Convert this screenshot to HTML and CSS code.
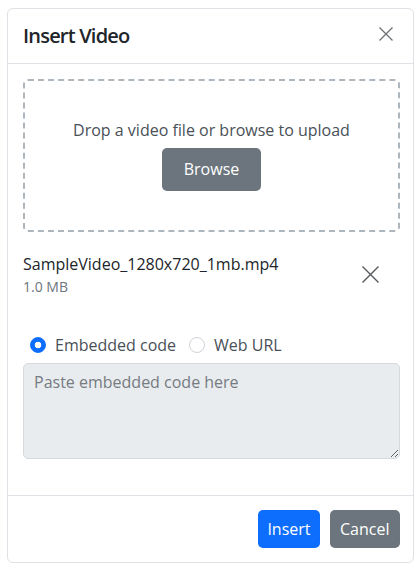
FILE: index.html
```html
<!DOCTYPE html>
<html lang="en">
<head>
<meta charset="utf-8">
<title>Insert Video</title>
<link rel="stylesheet" href="styles.css">
</head>
<body>
<div class="modal">
  <div class="modal-header">
    <h5 class="modal-title">Insert Video</h5>
    <button class="btn-close" type="button" aria-label="Close">
      <svg width="14" height="14" viewBox="0 0 14 14"><path d="M0.5 0.5L13.5 13.5M13.5 0.5L0.5 13.5" stroke="#6d7073" stroke-width="1.3" fill="none"/></svg>
    </button>
  </div>
  <div class="modal-body">
    <div class="dropzone">
      <p class="drop-text">Drop a video file or browse to upload</p>
      <button class="btn btn-browse" type="button">Browse</button>
    </div>
    <div class="file-row">
      <div class="file-info">
        <div class="file-name">SampleVideo_1280x720_1mb.mp4</div>
        <div class="file-size">1.0 MB</div>
      </div>
      <button class="file-remove" type="button" aria-label="Remove">
        <svg width="17" height="17" viewBox="0 0 17 17"><path d="M0.5 0.5L16.5 16.5M16.5 0.5L0.5 16.5" stroke="#55595d" stroke-width="1.4" fill="none"/></svg>
      </button>
    </div>
    <div class="radio-row">
      <label class="radio"><input type="radio" name="src" checked><span>Embedded code</span></label>
      <label class="radio"><input type="radio" name="src"><span>Web URL</span></label>
    </div>
    <textarea class="code-area" placeholder="Paste embedded code here" disabled></textarea>
  </div>
  <div class="modal-footer">
    <button class="btn btn-primary" type="button">Insert</button>
    <button class="btn btn-secondary" type="button">Cancel</button>
  </div>
</div>
</body>
</html>
```

FILE: styles.css
```css
* { box-sizing: border-box; }

body {
  margin: 0;
  background: #ffffff;
  font-family: "Segoe UI", "Open Sans", sans-serif;
  font-size: 16px;
  line-height: 24px;
  color: #212529;
}

.modal {
  margin: 8px 0 0 7px;
  width: 407px;
  border: 1px solid #dee2e6;
  border-radius: 6px;
  background: #fff;
}

.modal-header {
  display: flex;
  align-items: center;
  justify-content: space-between;
  padding: 15px 15px 15px 15px;
  border-bottom: 1px solid #dee2e6;
}

.modal-title {
  margin: 0;
  font-size: 20px;
  line-height: 24px;
  font-weight: 600;
  letter-spacing: -0.8px;
  color: #212529;
}

.btn-close {
  width: 24px;
  height: 24px;
  padding: 0;
  border: 0;
  background: transparent;
  display: flex;
  align-items: center;
  justify-content: center;
  margin-top: -5px;
}

.modal-body {
  padding: 15px 13px 36px 15px;
}

.dropzone {
  height: 153px;
  padding-bottom: 3px;
  border: 2px dashed #adb5bd;
  border-radius: 5px;
  display: flex;
  flex-direction: column;
  align-items: center;
  justify-content: center;
  gap: 6px;
}

.drop-text {
  margin: 0;
  color: #495057;
  font-size: 16px;
  line-height: 24px;
}

.btn {
  font-family: inherit;
  font-size: 16px;
  line-height: 24px;
  border: 1px solid transparent;
  border-radius: 5px;
  color: #fff;
  padding: 6px 10px;
}

.btn-browse {
  background: #6c757d;
  padding: 8px 21px 9px;
}

.file-row {
  margin-top: 20px;
  display: flex;
  align-items: center;
  justify-content: space-between;
}

.file-name {
  font-size: 16px;
  line-height: 24px;
  color: #212529;
}

.file-size {
  font-size: 14px;
  line-height: 21px;
  color: #6c757d;
}

.file-remove {
  border: 0;
  background: transparent;
  padding: 0;
  width: 17px;
  height: 17px;
  margin-right: 21px;
  display: flex;
}

.radio-row {
  margin-top: 36px;
  display: flex;
  align-items: center;
  padding-left: 7px;
  gap: 13px;
}

.radio {
  display: flex;
  align-items: center;
  gap: 9px;
  color: #495057;
}

.radio input {
  appearance: none;
  -webkit-appearance: none;
  margin: 0;
  width: 16px;
  height: 16px;
  border-radius: 50%;
  border: 1px solid #ced4da;
  background: #fff;
}

.radio input:checked {
  border-color: #0d6efd;
  background: radial-gradient(circle, #fff 0 3px, #0d6efd 3.6px);
}

.code-area {
  display: block;
  margin-top: 6px;
  width: 100%;
  height: 96px;
  padding: 6px 10px;
  font-family: inherit;
  font-size: 16px;
  line-height: 24px;
  background: #e9ecef;
  border: 1px solid #d6d9dd;
  border-radius: 5px;
  resize: both;
}

.code-area::placeholder {
  color: #757b81;
  opacity: 1;
}

.modal-footer {
  display: flex;
  justify-content: flex-end;
  gap: 10px;
  padding: 14px 13px 14px 15px;
  border-top: 1px solid #dee2e6;
}

.btn-primary {
  background: #0d6efd;
  padding: 6px 8px 6px 8.5px;
}

.btn-secondary {
  background: #6c757d;
  padding: 6px 9.5px;
}
```
